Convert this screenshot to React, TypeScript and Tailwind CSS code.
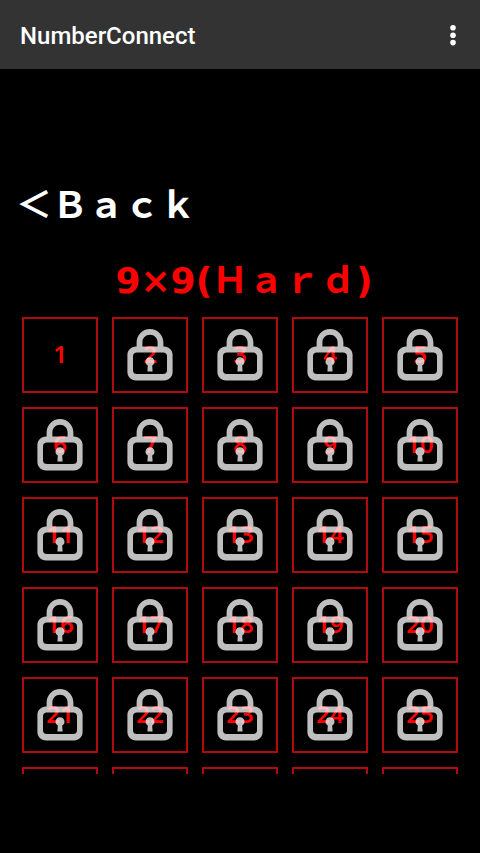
const LEVELS_PER_ROW = 5;
const LEVEL_COUNT = 25;
const UNLOCKED_COUNT = 1;

function MoreIcon() {
  return (
    <svg aria-hidden="true" className="w-6 h-[30px]" fill="currentColor" viewBox="0 0 24 30">
      <circle cx="12" cy="6.8" r="2.8" />
      <circle cx="12" cy="14.2" r="2.8" />
      <circle cx="12" cy="21.6" r="2.8" />
    </svg>
  );
}

function LockIcon() {
  return (
    <svg
      aria-hidden="true"
      className="absolute inset-0 m-auto w-[46px] h-[52px] text-white opacity-75"
      viewBox="0 0 46 52"
    >
      <path
        d="M9.6 17.4V13.4C9.6 6 15.6 0 23 0s13.4 6 13.4 13.4v4h.6c4.9 0 8.6 3.6 8.6 8.4v17.2c0 4.8-3.7 8.4-8.6 8.4H9c-4.9 0-8.6-3.6-8.6-8.4V25.8c0-4.8 3.7-8.4 8.6-8.4zM15.4 17.4h15.2V13.4c0-4.4-3.3-7.6-7.6-7.6s-7.6 3.2-7.6 7.6zM10 23.6c-2.4 0-4 1.4-4 3.6v14.2c0 2.2 1.6 3.6 4 3.6h26c2.4 0 4-1.4 4-3.6V27.2c0-2.2-1.6-3.6-4-3.6z"
        fill="currentColor"
        fillRule="evenodd"
      />
      <path
        d="M23 28.2a4.5 4.5 0 0 1 2.2 8.4l.4 5.8h-5.2l.4-5.8a4.5 4.5 0 0 1 2.2-8.4z"
        fill="currentColor"
      />
    </svg>
  );
}

interface LevelButtonProps {
  isLocked: boolean;
  level: number;
}

function LevelButton({ isLocked, level }: LevelButtonProps) {
  return (
    <button
      className="relative flex items-center justify-center aspect-square pb-[2px] border-2 border-[#b00c10] text-2xl font-semibold text-[#ff0000]"
      disabled={isLocked}
      type="button"
    >
      {level}
      {isLocked && <LockIcon />}
    </button>
  );
}

export default function App() {
  const levels = Array.from({ length: LEVEL_COUNT }, (_, index) => index + 1);
  const nextRow = Array.from({ length: LEVELS_PER_ROW }, (_, index) => index);

  return (
    <div className="flex flex-col min-h-screen bg-black text-white font-['Noto_Sans','Noto_Sans_CJK_JP',sans-serif]">
      <header className="flex items-center justify-between h-[69px] pt-[2px] pl-5 pr-[15px] bg-[#333333]">
        <h1 className="font-['Roboto',sans-serif] text-2xl font-medium">NumberConnect</h1>
        <button aria-label="More options" type="button">
          <MoreIcon />
        </button>
      </header>
      <main className="flex flex-col pt-[108px]">
        <button
          className="self-start ml-4 text-4xl leading-[56px] font-bold"
          type="button"
        >
          ＜Ｂａｃｋ
        </button>
        <h2 className="mt-5 pl-2 font-['DejaVu_Sans','Noto_Sans_CJK_JP',sans-serif] text-4xl leading-[56px] font-bold text-center text-[#ff0000]">
          9×9(Ｈａｒｄ)
        </h2>
        <div className="grid grid-cols-5 gap-[14px] mt-2 px-[22px]">
          {levels.map((level) => (
            <LevelButton isLocked={level > UNLOCKED_COUNT} key={level} level={level} />
          ))}
          {nextRow.map((column) => (
            <div className="h-[7px] border-2 border-b-0 border-[#b00c10]" key={column} />
          ))}
        </div>
      </main>
    </div>
  );
}
